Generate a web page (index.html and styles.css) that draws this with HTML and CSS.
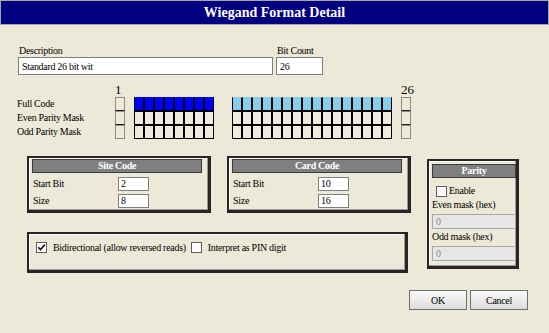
FILE: index.html
```html
<!DOCTYPE html>
<html>
<head>
<meta charset="utf-8">
<link rel="stylesheet" href="styles.css">
</head>
<body>
<div class="title">Wiegand Format Detail</div>

<div class="desc-row">
  <div class="field">
    <div class="lbl">Description</div>
    <input class="txt desc" type="text" value="Standard 26 bit wit">
  </div>
  <div class="field">
    <div class="lbl">Bit Count</div>
    <input class="txt count" type="text" value="26">
  </div>
</div>

<div class="bits">
  <div class="row-labels">
    <div class="hdr"></div>
    <div class="rl">Full Code</div>
    <div class="rl">Even Parity Mask</div>
    <div class="rl">Odd Parity Mask</div>
  </div>
  <div class="bitcol gap-s">
    <div class="hdr">1</div>
    <div class="cell dis"></div>
    <div class="cell dis"></div>
    <div class="cell dis"></div>
  </div>
  <div class="bitcol gap-l">
    <div class="hdr"></div>
    <div class="grid g8">
      <div class="cell site"></div><div class="cell site"></div><div class="cell site"></div><div class="cell site"></div>
      <div class="cell site"></div><div class="cell site"></div><div class="cell site"></div><div class="cell site"></div>
      <div class="cell"></div><div class="cell"></div><div class="cell"></div><div class="cell"></div>
      <div class="cell"></div><div class="cell"></div><div class="cell"></div><div class="cell"></div>
      <div class="cell"></div><div class="cell"></div><div class="cell"></div><div class="cell"></div>
      <div class="cell"></div><div class="cell"></div><div class="cell"></div><div class="cell"></div>
    </div>
  </div>
  <div class="bitcol gap-s">
    <div class="hdr"></div>
    <div class="grid g16">
      <div class="cell card"></div><div class="cell card"></div><div class="cell card"></div><div class="cell card"></div>
      <div class="cell card"></div><div class="cell card"></div><div class="cell card"></div><div class="cell card"></div>
      <div class="cell card"></div><div class="cell card"></div><div class="cell card"></div><div class="cell card"></div>
      <div class="cell card"></div><div class="cell card"></div><div class="cell card"></div><div class="cell card"></div>
      <div class="cell"></div><div class="cell"></div><div class="cell"></div><div class="cell"></div>
      <div class="cell"></div><div class="cell"></div><div class="cell"></div><div class="cell"></div>
      <div class="cell"></div><div class="cell"></div><div class="cell"></div><div class="cell"></div>
      <div class="cell"></div><div class="cell"></div><div class="cell"></div><div class="cell"></div>
      <div class="cell"></div><div class="cell"></div><div class="cell"></div><div class="cell"></div>
      <div class="cell"></div><div class="cell"></div><div class="cell"></div><div class="cell"></div>
      <div class="cell"></div><div class="cell"></div><div class="cell"></div><div class="cell"></div>
      <div class="cell"></div><div class="cell"></div><div class="cell"></div><div class="cell"></div>
    </div>
  </div>
  <div class="bitcol">
    <div class="hdr">26</div>
    <div class="cell dis"></div>
    <div class="cell dis"></div>
    <div class="cell dis"></div>
  </div>
</div>

<div class="main">
  <div class="left">
    <div class="codes">
      <div class="box code">
        <div class="bhead">Site Code</div>
        <div class="frow"><span class="flbl">Start Bit</span><input class="txt small" type="text" value="2"></div>
        <div class="frow"><span class="flbl">Size</span><input class="txt small" type="text" value="8"></div>
      </div>
      <div class="box code">
        <div class="bhead">Card Code</div>
        <div class="frow"><span class="flbl">Start Bit</span><input class="txt small" type="text" value="10"></div>
        <div class="frow"><span class="flbl">Size</span><input class="txt small" type="text" value="16"></div>
      </div>
    </div>
    <div class="box opts">
      <span class="cb"><svg viewBox="0 0 9 9" width="9" height="9"><path d="M1.3 4.2 L3.4 6.6 L7.8 1.6" fill="none" stroke="#1a1a1a" stroke-width="1.7"/></svg></span>
      <span class="optlbl">Bidirectional (allow reversed reads)</span>
      <span class="cb"></span>
      <span class="optlbl">Interpret as PIN digit</span>
    </div>
  </div>
  <div class="box parity">
    <div class="bhead">Parity</div>
    <div class="enable"><span class="cb big"></span><span>Enable</span></div>
    <div class="plbl">Even mask (hex)</div>
    <input class="txt pin" type="text" value="0" disabled>
    <div class="plbl">Odd mask (hex)</div>
    <input class="txt pin" type="text" value="0" disabled>
  </div>
</div>

<div class="actions">
  <button class="btn">OK</button>
  <button class="btn">Cancel</button>
</div>
</body>
</html>
```

FILE: styles.css
```css
html, body {
  margin: 0;
  padding: 0;
}
body {
  width: 549px;
  height: 333px;
  overflow: hidden;
  background: #ece9d8;
  font: 10px "Liberation Serif", "Times New Roman", serif;
  letter-spacing: -0.3px;
  color: #000;
}

.title {
  height: 23px;
  line-height: 23px;
  border: 1px solid #a8a8a8;
  background: #000080;
  color: #fff;
  font-weight: bold;
  font-size: 14px;
  letter-spacing: 0;
  text-align: center;
}

.desc-row {
  display: flex;
  gap: 3px;
  margin: 19px 0 0 18px;
}
.lbl {
  height: 13px;
  line-height: 13px;
  padding-left: 1px;
}
.txt {
  box-sizing: border-box;
  height: 18px;
  border: 1px solid #7f7f7f;
  background: #fff;
  font: 10px "Liberation Serif", "Times New Roman", serif;
  letter-spacing: -0.3px;
  color: #000;
  padding: 0 3px;
  margin: 0;
  outline: none;
}
.desc { width: 255px; }
.count { width: 47px; }

.bits {
  display: flex;
  margin-top: 8px;
}
.row-labels {
  width: 115px;
  box-sizing: border-box;
  padding-left: 17px;
}
.rl {
  height: 14px;
  line-height: 14px;
}
.hdr {
  height: 14px;
  line-height: 14px;
  font-size: 13px;
  letter-spacing: 0;
}
.bitcol.gap-s { margin-right: 9px; }
.bitcol.gap-l { margin-right: 18px; }

.grid {
  display: grid;
}
.g8 { grid-template-columns: repeat(8, 10px); }
.g16 { grid-template-columns: repeat(16, 10px); }

.cell {
  box-sizing: border-box;
  width: 10px;
  height: 14px;
  border: 1px solid #000;
  background: #efebdd;
}
.cell.site {
  background: #0000ff;
  border-top-color: #0000ff;
}
.cell.card {
  background: #87ceeb;
  border-top-color: #87ceeb;
}
.cell.dis {
  border-color: #8a8a8a;
  border-bottom-color: #222;
  background: #ece9d8;
}
.cell.dis:last-child { border-bottom-color: #8a8a8a; }

.main {
  display: flex;
  align-items: flex-start;
  gap: 16px;
  margin: 17px 0 0 27px;
}
.left { width: 384px; }
.codes {
  display: flex;
  gap: 16px;
}
.box {
  box-sizing: border-box;
  border: 2px solid #262626;
  border-right-width: 3px;
  border-bottom-width: 3px;
  box-shadow: inset -1px -1px 0 #9a9a9a, inset 1px 1px 0 #fdfdf6;
}
.code {
  width: 184px;
  padding: 1px 3px 1px 3px;
}
.code .bhead { margin-right: 3px; }
.bhead {
  box-sizing: border-box;
  height: 14px;
  line-height: 12px;
  border: 1px solid #3c3c3c;
  background: #7f7f7f;
  color: #fff;
  font-weight: bold;
  text-align: center;
  margin-bottom: 2px;
}
.frow {
  display: flex;
  align-items: center;
  height: 17px;
}
.flbl {
  width: 86px;
  padding-left: 1px;
  box-sizing: border-box;
}
.small {
  width: 31px;
  height: 14px;
  padding: 0 2px;
}

.opts {
  width: 381px;
  height: 41px;
  margin-top: 19px;
  padding: 8px 0 0 7px;
  display: flex;
  align-items: flex-start;
}
.cb {
  box-sizing: border-box;
  width: 11px;
  height: 11px;
  border: 1px solid #5e5e5e;
  background: #fff;
  display: inline-flex;
  align-items: center;
  justify-content: center;
  flex: none;
}
.optlbl {
  line-height: 12px;
  margin: 0 5px 0 6px;
}

.parity {
  width: 92px;
  margin-top: 3px;
  padding: 3px 0 5px 3px;
}
.parity .bhead { margin-bottom: 0; }
.enable {
  display: flex;
  align-items: flex-end;
  height: 16px;
  margin-top: 3px;
  padding-left: 4px;
  line-height: 12px;
}
.enable .cb { margin-right: 2px; }
.plbl {
  height: 14px;
  line-height: 14px;
  margin-top: 1px;
}
.pin {
  display: block;
  width: 84px;
  height: 15px;
  margin-top: 2px;
  background: #e6e6e6;
  border-color: #a8a8a8;
  color: #8a8a8a;
}

.actions {
  display: flex;
  justify-content: flex-end;
  gap: 3px;
  margin: 17px 21px 0 0;
}
.btn {
  box-sizing: border-box;
  width: 58px;
  height: 20px;
  margin: 0;
  padding: 0;
  border: 1px solid #6f6f6f;
  border-radius: 0;
  background: linear-gradient(#fbfbfb, #dcdcdc);
  font: 10px "Liberation Serif", "Times New Roman", serif;
  letter-spacing: -0.3px;
  color: #000;
}
```
